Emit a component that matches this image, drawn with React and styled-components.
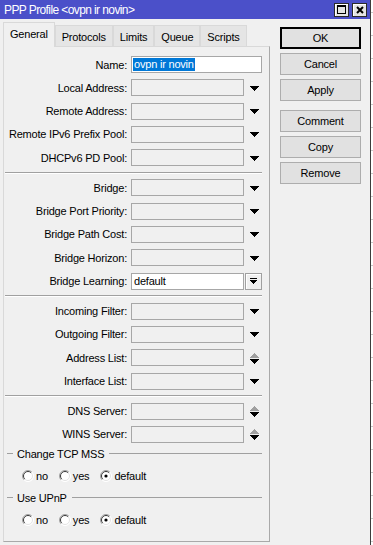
import React from "react";
import styled, { createGlobalStyle, css } from "styled-components";

const GlobalStyle = createGlobalStyle`
  html, body { margin: 0; padding: 0; background: #f0f0f0; }
  body {
    font-family: "Liberation Sans", Arial, sans-serif;
    font-size: 11px;
    color: #000;
  }
  * { box-sizing: border-box; }
`;

const Screen = styled.div`
  display: flex;
  width: 373px;
  height: 545px;
  overflow: hidden;
`;

const Window = styled.div`
  width: 370px;
  display: flex;
  flex-direction: column;
  background: #f0f0f0;
`;

const Edge = styled.div`
  width: 1px;
  background: #3c3c3c;
`;

const Backdrop = styled.div`
  flex: 1;
  background: repeating-linear-gradient(
    to bottom,
    #ffffff 0 12px,
    #c9c9c9 12px 13px,
    #ffffff 13px 23px
  );
`;

const TitleBar = styled.div`
  height: 19px;
  flex: none;
  background: #4b50c9;
  display: flex;
  align-items: center;
  padding: 0 3px 0 4px;
  color: #fff;
`;

const TitleText = styled.span`
  font-size: 12px;
  letter-spacing: -0.6px;
  white-space: nowrap;
`;

const TitleButtons = styled.div`
  margin-left: auto;
  display: flex;
  gap: 3px;
`;

const WinButton = styled.div`
  width: 15px;
  height: 14px;
  background: #e4e4e4;
  border: 1px solid #2a2a2a;
  box-shadow: inset 1px 1px 0 #ffffff;
  display: flex;
  align-items: center;
  justify-content: center;
`;

const Body = styled.div`
  display: flex;
  align-items: flex-start;
  padding: 3px 0 0 3px;
`;

const TabArea = styled.div`
  width: 267px;
  display: flex;
  flex-direction: column;
`;

const TabBar = styled.div`
  height: 24px;
  display: flex;
  align-items: flex-end;
`;

const Tab = styled.div`
  height: 21px;
  padding: 2px 6px 0;
  display: flex;
  align-items: center;
  border: 1px solid #d9d9d9;
  border-bottom: none;
  background: #e5e5e5;
  letter-spacing: -0.2px;
  white-space: nowrap;
  ${(p) =>
    p.$active &&
    css`
      height: 25px;
      padding: 0 6px 2px;
      margin-bottom: -1px;
      background: #f0f0f0;
      position: relative;
      z-index: 1;
    `}
`;

const Panel = styled.div`
  height: 496px;
  border: 1px solid #a9a9a9;
  border-top-color: #d9d9d9;
  border-left-color: #d9d9d9;
  background: #f0f0f0;
  padding-top: 9px;
  display: flex;
  flex-direction: column;
`;

const Section = styled.div`
  display: flex;
  flex-direction: column;
  gap: 6.33px;
`;

const Row = styled.div`
  display: flex;
  align-items: center;
  height: 17px;
`;

const Label = styled.div`
  width: 123px;
  margin-right: 4px;
  text-align: right;
  white-space: nowrap;
  letter-spacing: -0.2px;
`;

const Field = styled.div`
  width: ${(p) => (p.$wide ? 131 : 113)}px;
  height: 17px;
  border: 1px solid #a7a7a7;
  background: ${(p) => (p.$white ? "#ffffff" : "#f0f0f0")};
  padding-left: ${(p) => (p.$pad ? 2 : 1)}px;
  display: flex;
  align-items: center;
  letter-spacing: -0.2px;
  white-space: nowrap;
`;

const Selection = styled.span`
  background: #0078d7;
  color: #fff;
  line-height: 13px;
  padding: 0 1px;
`;

const ArrowSlot = styled.div`
  width: 9px;
  height: 17px;
  margin-left: 6px;
  display: flex;
  align-items: center;
  justify-content: center;
  padding-top: 1px;
`;

const SideButton = styled.div`
  width: 17px;
  height: 17px;
  margin-left: 1px;
  border: 1px solid #a0a0a0;
  box-shadow: inset 1px 1px 0 #ffffff;
  background: #f0f0f0;
  display: flex;
  align-items: center;
  justify-content: center;
`;

const Separator = styled.div`
  height: 2px;
  margin: 5.5px 7px 5.5px 1px;
  border-top: 1px solid #a0a0a0;
  border-bottom: 1px solid #ffffff;
`;

const GroupHeader = styled.div`
  display: flex;
  align-items: center;
  height: 14px;
  margin: ${(p) => p.$top}px 7px 0 3px;
  letter-spacing: -0.2px;
  white-space: nowrap;
`;

const HeaderLine = styled.div`
  height: 1px;
  background: #a0a0a0;
  ${(p) =>
    p.$lead
      ? css`
          width: 6px;
          margin-right: 4px;
        `
      : css`
          flex: 1;
          margin-left: 5px;
        `}
`;

const RadioRow = styled.div`
  display: flex;
  align-items: center;
  gap: 11px;
  height: 14px;
  margin-top: 8px;
  padding-left: 18px;
`;

const RadioOption = styled.label`
  display: flex;
  align-items: center;
  gap: 2px;
  letter-spacing: -0.2px;
`;

const ButtonColumn = styled.div`
  display: flex;
  flex-direction: column;
  gap: 4px;
  width: 81px;
  margin: 5px 0 0 10px;
`;

const DialogButton = styled.button`
  width: 81px;
  height: 22px;
  padding: 0;
  font-family: inherit;
  font-size: 11px;
  letter-spacing: -0.2px;
  color: #000;
  background: #e1e1e1;
  border: 1px solid #adadad;
  ${(p) =>
    p.$default &&
    css`
      border: 2px solid #000;
    `}
  ${(p) =>
    p.$spaced &&
    css`
      margin-top: 5px;
    `}
`;

const DownArrow = () => (
  <svg width="9" height="5" viewBox="0 0 9 5" shapeRendering="crispEdges">
    <path
      d="M0 0h9v1h-1v1h-1v1h-1v1h-1v1h-1v-1h-1v-1h-1v-1h-1v-1h-1z"
      fill="#000"
    />
  </svg>
);

const SpinArrow = () => (
  <svg width="9" height="11" viewBox="0 0 9 11" shapeRendering="crispEdges">
    <path
      d="M4 0h1v1h1v1h1v1h1v1h1v1h-9v-1h1v-1h1v-1h1v-1h1z"
      fill="#a0a0a0"
    />
    <path
      d="M0 6h9v1h-1v1h-1v1h-1v1h-1v1h-1v-1h-1v-1h-1v-1h-1v-1h-1z"
      fill="#000"
    />
  </svg>
);

const BarArrow = () => (
  <svg width="7" height="6" viewBox="0 0 7 6" shapeRendering="crispEdges">
    <path d="M0 0h7v1h-7z" fill="#000" />
    <path d="M0 2h7v1h-1v1h-1v1h-1v1h-1v-1h-1v-1h-1v-1h-1z" fill="#000" />
  </svg>
);

const MaxGlyph = () => (
  <svg width="9" height="9" viewBox="0 0 9 9" shapeRendering="crispEdges">
    <path d="M0 0h9v9h-9z M1 2v6h7v-6z" fill="#000" fillRule="evenodd" />
  </svg>
);

const CloseGlyph = () => (
  <svg width="8" height="8" viewBox="0 0 8 8">
    <path d="M1 1L7 7M7 1L1 7" stroke="#000" strokeWidth="2" />
  </svg>
);

const RadioMark = ({ checked }) => (
  <svg width="12" height="12" viewBox="0 0 12 12">
    <circle cx="6" cy="6" r="5.5" fill="#ffffff" />
    <path d="M2.1 9.9A5.5 5.5 0 0 1 9.9 2.1" stroke="#a0a0a0" fill="none" />
    <path d="M2.8 9.2A4.5 4.5 0 0 1 9.2 2.8" stroke="#3a3a3a" fill="none" />
    <path d="M9.9 2.1A5.5 5.5 0 0 1 2.1 9.9" stroke="#ffffff" fill="none" />
    <path d="M9.2 2.8A4.5 4.5 0 0 1 2.8 9.2" stroke="#e3e3e3" fill="none" />
    {checked && <circle cx="6" cy="6" r="1.6" fill="#000" />}
  </svg>
);

const ComboRow = ({ label, spin }) => (
  <Row>
    <Label>{label}</Label>
    <Field />
    <ArrowSlot>{spin ? <SpinArrow /> : <DownArrow />}</ArrowSlot>
  </Row>
);

const RadioGroup = ({ title, top }) => (
  <>
    <GroupHeader $top={top}>
      <HeaderLine $lead />
      {title}
      <HeaderLine />
    </GroupHeader>
    <RadioRow>
      <RadioOption>
        <RadioMark />
        no
      </RadioOption>
      <RadioOption>
        <RadioMark />
        yes
      </RadioOption>
      <RadioOption>
        <RadioMark checked />
        default
      </RadioOption>
    </RadioRow>
  </>
);

const tabs = ["General", "Protocols", "Limits", "Queue", "Scripts"];

export default function App() {
  return (
    <>
      <GlobalStyle />
      <Screen>
        <Window>
          <TitleBar>
            <TitleText>PPP Profile &lt;ovpn ir novin&gt;</TitleText>
            <TitleButtons>
              <WinButton>
                <MaxGlyph />
              </WinButton>
              <WinButton>
                <CloseGlyph />
              </WinButton>
            </TitleButtons>
          </TitleBar>
          <Body>
            <TabArea>
              <TabBar>
                {tabs.map((t, i) => (
                  <Tab key={t} $active={i === 0}>
                    {t}
                  </Tab>
                ))}
              </TabBar>
              <Panel>
                <Section>
                  <Row>
                    <Label>Name:</Label>
                    <Field $wide $white>
                      <Selection>ovpn ir novin</Selection>
                    </Field>
                  </Row>
                  <ComboRow label="Local Address:" />
                  <ComboRow label="Remote Address:" />
                  <ComboRow label="Remote IPv6 Prefix Pool:" />
                  <ComboRow label="DHCPv6 PD Pool:" />
                </Section>
                <Separator />
                <Section>
                  <ComboRow label="Bridge:" />
                  <ComboRow label="Bridge Port Priority:" />
                  <ComboRow label="Bridge Path Cost:" />
                  <ComboRow label="Bridge Horizon:" />
                  <Row>
                    <Label>Bridge Learning:</Label>
                    <Field $white $pad>
                      default
                    </Field>
                    <SideButton>
                      <BarArrow />
                    </SideButton>
                  </Row>
                </Section>
                <Separator />
                <Section>
                  <ComboRow label="Incoming Filter:" />
                  <ComboRow label="Outgoing Filter:" />
                  <ComboRow label="Address List:" spin />
                  <ComboRow label="Interface List:" />
                </Section>
                <Separator />
                <Section>
                  <ComboRow label="DNS Server:" spin />
                  <ComboRow label="WINS Server:" spin />
                </Section>
                <RadioGroup title="Change TCP MSS" top={4} />
                <RadioGroup title="Use UPnP" top={8} />
              </Panel>
            </TabArea>
            <ButtonColumn>
              <DialogButton $default>OK</DialogButton>
              <DialogButton>Cancel</DialogButton>
              <DialogButton>Apply</DialogButton>
              <DialogButton $spaced>Comment</DialogButton>
              <DialogButton>Copy</DialogButton>
              <DialogButton>Remove</DialogButton>
            </ButtonColumn>
          </Body>
        </Window>
        <Edge />
        <Backdrop />
      </Screen>
    </>
  );
}
